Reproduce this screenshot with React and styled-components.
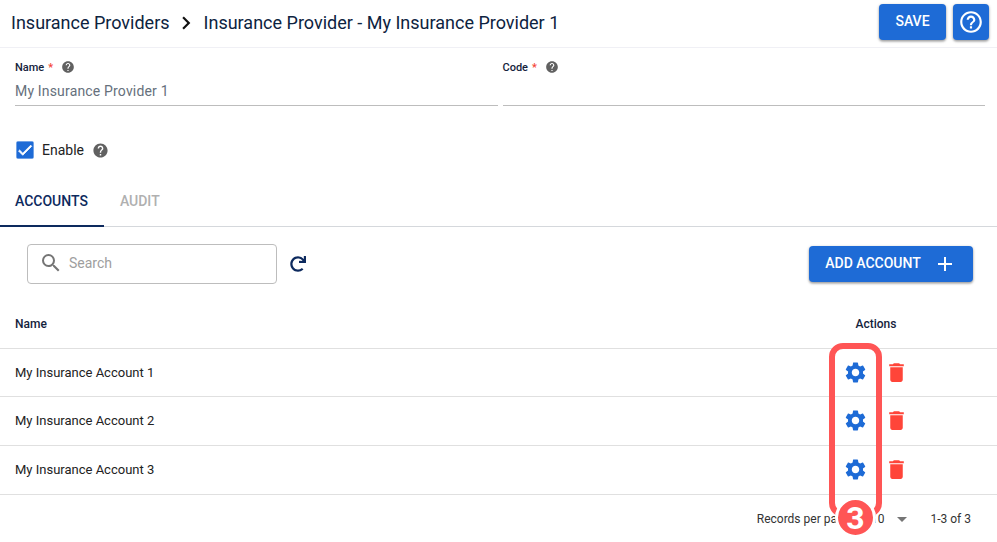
import styled, { createGlobalStyle } from "styled-components";
import { FaRedo } from "react-icons/fa";
import {
    MdAdd,
    MdArrowDropDown,
    MdCheck,
    MdDelete,
    MdHelp,
    MdHelpOutline,
    MdNavigateNext,
    MdSearch,
    MdSettings,
} from "react-icons/md";

const GlobalStyle = createGlobalStyle`
    html, body {
        margin: 0;
        padding: 0;
        background: #fff;
        font-family: Roboto, "Liberation Sans", sans-serif;
        color: #111;
    }
`;

const Page = styled.div`
    position: relative;
    width: 997px;
    height: 542px;
    overflow: hidden;
`;

const Header = styled.header`
    display: flex;
    align-items: flex-start;
    justify-content: space-between;
    height: 47px;
    box-sizing: content-box;
    padding: 0 8px 0 11px;
    border-bottom: 1px solid #f0f0f5;
`;

const Breadcrumb = styled.div`
    display: flex;
    align-items: center;
    height: 44px;
    font-size: 18px;
    color: #0d2340;
    svg {
        font-size: 26px;
        margin: 1px 5px 0 3px;
        color: #111;
    }
`;

const HeaderActions = styled.div`
    display: flex;
    gap: 7px;
    padding-top: 4px;
`;

const Button = styled.button`
    display: flex;
    align-items: center;
    justify-content: center;
    border: 0;
    border-radius: 4px;
    padding: 0;
    height: 36px;
    width: ${(p) => p.$width}px;
    background: #1e6bd6;
    color: #fff;
    font-family: inherit;
    font-size: 14px;
    font-weight: 500;
    box-shadow: 0 1px 3px rgba(0, 0, 0, 0.35), 0 2px 2px rgba(0, 0, 0, 0.12);
`;

const ButtonText = styled.span`
    margin-bottom: 2px;
`;

const Form = styled.div`
    display: flex;
    gap: 5px;
    padding: 12px 12px 0 15px;
`;

const Field = styled.div`
    flex: 1;
    height: 45px;
    border-bottom: 1px solid #bdbdbd;
`;

const Label = styled.div`
    display: flex;
    align-items: center;
    height: 14px;
    font-size: 11px;
    font-weight: 500;
    color: #14233c;
`;

const Required = styled.span`
    color: #f44336;
    margin-left: 4px;
`;

const HelpIcon = styled(MdHelp)`
    color: #616161;
    font-size: ${(p) => p.$size}px;
    margin-left: ${(p) => p.$gap}px;
`;

const FieldValue = styled.div`
    margin-top: 9px;
    font-size: 14px;
    letter-spacing: 0.17px;
    color: #66707c;
`;

const EnableRow = styled.div`
    display: flex;
    align-items: center;
    height: 18px;
    margin-top: 35px;
    padding-left: 16px;
    font-size: 14px;
    color: #222;
`;

const CheckBox = styled.span`
    display: flex;
    align-items: center;
    justify-content: center;
    width: 18px;
    height: 18px;
    margin-right: 8px;
    border-radius: 2px;
    background: #1e6bd6;
    color: #fff;
    font-size: 18px;
    svg {
        stroke: currentColor;
        stroke-width: 1;
    }
`;

const Tabs = styled.div`
    display: flex;
    height: 47px;
    margin-top: 20px;
    border-bottom: 1px solid #d5d8dc;
`;

const Tab = styled.div`
    display: flex;
    align-items: center;
    padding: 0 16px 2px 16px;
    margin-bottom: -1px;
    font-size: 14px;
    font-weight: 500;
    color: ${(p) => (p.$active ? "#0d2a5e" : "#b0b0b0")};
    border-bottom: 2px solid ${(p) => (p.$active ? "#0d2a5e" : "transparent")};
    &:first-child {
        padding-left: 15px;
    }
`;

const Toolbar = styled.div`
    display: flex;
    align-items: center;
    height: 40px;
    margin-top: 17px;
    padding: 0 24px 0 27px;
`;

const SearchBox = styled.div`
    display: flex;
    align-items: center;
    width: 250px;
    height: 40px;
    box-sizing: border-box;
    padding: 0 0 2px 11px;
    border: 1px solid #bdbdbd;
    border-radius: 4px;
    font-size: 14px;
    color: #9e9e9e;
    svg {
        font-size: 24px;
        color: #757575;
        margin-right: 6px;
    }
`;

const RefreshIcon = styled(FaRedo)`
    margin-left: 13px;
    font-size: 16px;
    color: #0d2a5e;
`;

const AddButton = styled(Button)`
    margin-left: auto;
    gap: 12px;
    svg {
        font-size: 24px;
    }
`;

const Table = styled.div`
    margin-top: 21px;
`;

const Row = styled.div`
    display: flex;
    align-items: center;
    height: ${(p) => p.$height}px;
    padding: 0 0 1px 15px;
    border-bottom: 1px solid #e0e0e0;
    font-size: 13px;
    color: #222;
`;

const HeadRow = styled(Row)`
    padding-bottom: 6px;
    height: 37px;
`;

const HeadCell = styled.div`
    font-weight: 500;
    font-size: 12px;
    color: #14233c;
`;

const ActionsHead = styled.div`
    margin-left: auto;
    width: 122px;
    margin-right: 60px;
    text-align: center;
    font-size: 12px;
    font-weight: 500;
    color: #14233c;
`;

const RowActions = styled.div`
    display: flex;
    align-items: center;
    gap: 16px;
    margin-left: auto;
    margin-right: 88px;
`;

const GearIcon = styled(MdSettings)`
    font-size: 25px;
    color: #1e6bd6;
`;

const TrashIcon = styled(MdDelete)`
    font-size: 25px;
    color: #ff4539;
`;

const Pagination = styled.div`
    display: flex;
    align-items: center;
    justify-content: flex-end;
    height: 48px;
    padding-right: 26px;
    font-size: 12px;
    color: #333;
`;

const PageSize = styled.span`
    margin-left: 18px;
`;

const DropIcon = styled(MdArrowDropDown)`
    font-size: 24px;
    color: #757575;
    margin: 0 16px 0 6px;
`;

const Callout = styled.div`
    position: absolute;
    left: 829px;
    top: 343px;
    width: 53px;
    height: 174px;
    box-sizing: border-box;
    border: 6px solid #ff5555;
    border-radius: 14px;
`;

const CalloutBadge = styled.div`
    position: absolute;
    left: 835px;
    top: 497px;
    width: 35px;
    height: 35px;
    display: flex;
    align-items: center;
    justify-content: center;
    border: 3px solid #fff;
    border-radius: 50%;
    background: #ff5555;
    color: #fff;
    font-size: 32px;
    font-weight: 700;
`;

const accounts = [
    { name: "My Insurance Account 1", height: 46 },
    { name: "My Insurance Account 2", height: 47 },
    { name: "My Insurance Account 3", height: 47 },
];

export default function App() {
    return (
        <Page>
            <GlobalStyle />
            <Header>
                <Breadcrumb>
                    Insurance Providers
                    <MdNavigateNext />
                    Insurance Provider - My Insurance Provider 1
                </Breadcrumb>
                <HeaderActions>
                    <Button $width={67}>
                        <ButtonText>SAVE</ButtonText>
                    </Button>
                    <Button $width={36}>
                        <MdHelpOutline size={26} />
                    </Button>
                </HeaderActions>
            </Header>
            <Form>
                <Field>
                    <Label>
                        Name <Required>*</Required>
                        <HelpIcon $size={14} $gap={8} />
                    </Label>
                    <FieldValue>My Insurance Provider 1</FieldValue>
                </Field>
                <Field>
                    <Label>
                        Code <Required>*</Required>
                        <HelpIcon $size={14} $gap={8} />
                    </Label>
                </Field>
            </Form>
            <EnableRow>
                <CheckBox>
                    <MdCheck />
                </CheckBox>
                Enable
                <HelpIcon $size={17} $gap={8} />
            </EnableRow>
            <Tabs>
                <Tab $active>ACCOUNTS</Tab>
                <Tab>AUDIT</Tab>
            </Tabs>
            <Toolbar>
                <SearchBox>
                    <MdSearch />
                    Search
                </SearchBox>
                <RefreshIcon />
                <AddButton $width={164}>
                    <ButtonText>ADD ACCOUNT</ButtonText>
                    <MdAdd />
                </AddButton>
            </Toolbar>
            <Table>
                <HeadRow>
                    <HeadCell>Name</HeadCell>
                    <ActionsHead>Actions</ActionsHead>
                </HeadRow>
                {accounts.map((account) => (
                    <Row key={account.name} $height={account.height}>
                        {account.name}
                        <RowActions>
                            <GearIcon />
                            <TrashIcon />
                        </RowActions>
                    </Row>
                ))}
            </Table>
            <Pagination>
                Records per page: <PageSize>10</PageSize>
                <DropIcon />
                1-3 of 3
            </Pagination>
            <Callout />
            <CalloutBadge>3</CalloutBadge>
        </Page>
    );
}
